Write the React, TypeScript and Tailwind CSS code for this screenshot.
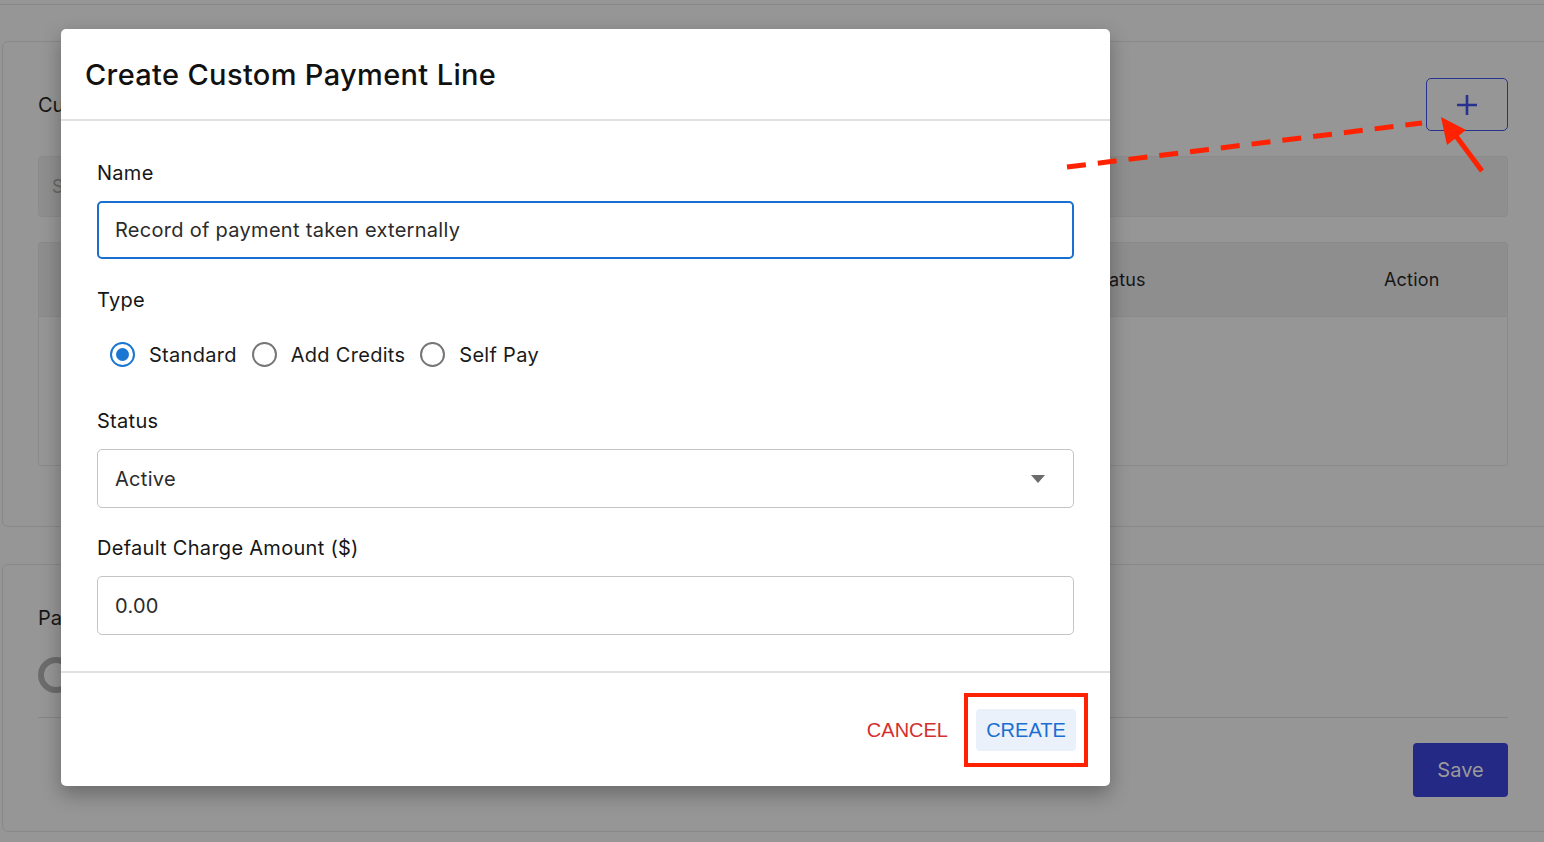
import React from 'react';

function Radio({ checked, label }: { checked?: boolean; label: string }) {
  return (
    <label className="flex items-center">
      <span
        className={`flex h-[25px] w-[25px] items-center justify-center rounded-full border-2 ${
          checked ? 'border-[#1976d2]' : 'border-[#767676]'
        }`}
      >
        {checked && <span className="h-[13px] w-[13px] rounded-full bg-[#1976d2]" />}
      </span>
      <span className="ml-[14px] text-[20px] leading-[24px] text-[#1a1a1a]">{label}</span>
    </label>
  );
}

export default function App() {
  return (
    <div className="relative h-[842px] w-[1544px] overflow-hidden bg-[#969696] font-['Inter',sans-serif] text-[#161616]">
      {/* page behind the dialog */}
      <div className="h-[5px] border-b border-[#878787]" />

      <div className="ml-[2px] mt-[36px] h-[486px] w-[1560px] rounded-[6px] border border-[#888888] pl-[35px] pt-[36px]">
        <div className="w-[1470px]">
          <div className="flex h-[53px] items-center justify-between">
            <div className="text-[20px]">Cu</div>
            <div className="flex h-[53px] w-[82px] items-center justify-center rounded-[5px] border border-[#27318f]">
              <svg width="24" height="24" viewBox="0 0 24 24" fill="none" stroke="#27318f" strokeWidth="2.6">
                <path d="M12 2v20M2 12h20" />
              </svg>
            </div>
          </div>
          <div className="mt-[25px] flex h-[61px] items-center rounded-[4px] border border-[#8b8b8b] bg-[#8f8f8f] px-[13px] text-[18px] text-[#676767]">
            S
          </div>
          <div className="mt-[25px] h-[224px] rounded-[3px] border border-[#8a8a8a]">
            <div className="flex h-[74px] items-center border-b border-[#8a8a8a] bg-[#8e8e8f] text-[18px]">
              <div className="w-[1036px]" />
              <div className="w-[293px] pl-4 tracking-[0.01em]">Status</div>
              <div className="pl-4 tracking-[0.01em]">Action</div>
            </div>
          </div>
        </div>
      </div>

      <div className="ml-[2px] mt-[37px] h-[268px] w-[1560px] rounded-[6px] border border-[#888888] pl-[35px] pt-[41px]">
        <div className="w-[1470px]">
          <div className="text-[20px] leading-[24px]">Pa</div>
          <div className="mt-[27px] h-[36px] w-[36px] rounded-full border-[6px] border-[#6c6c6c]" />
          <div className="mt-[24px] border-t border-[#858585]" />
          <div className="mt-[25px] flex justify-end">
            <div className="flex h-[54px] w-[95px] items-center justify-center rounded-[4px] bg-[#242985] text-[20px] text-[#9a9a9a]">
              Save
            </div>
          </div>
        </div>
      </div>

      {/* dialog */}
      <div className="absolute left-[61px] top-[29px] flex h-[757px] w-[1049px] flex-col rounded-[5px] bg-white shadow-[0_8px_20px_rgba(0,0,0,0.3)]">
        <div className="flex h-[92px] items-center border-b-2 border-[#e2e2e2] px-[24px]">
          <h1 className="text-[29px] font-medium leading-none tracking-[0.012em] text-[#111]">Create Custom Payment Line</h1>
        </div>

        <div className="flex-1 px-[36px] pt-[40px] tracking-[0.018em]">
          <div className="h-[24px] text-[20px] leading-[24px]">Name</div>
          <div className="mt-[16px] flex h-[58px] items-center rounded-[5px] border-2 border-[#1a6fd1] px-[16px] text-[20px] text-[#2b2b2b]">
            Record of payment taken externally
          </div>

          <div className="mt-[29px] h-[24px] text-[20px] leading-[24px]">Type</div>
          <div className="ml-[13px] mt-[30px] flex gap-[15px]">
            <Radio checked label="Standard" />
            <Radio label="Add Credits" />
            <Radio label="Self Pay" />
          </div>

          <div className="mt-[42px] h-[24px] text-[20px] leading-[24px]">Status</div>
          <div className="mt-[16px] flex h-[59px] items-center justify-between rounded-[5px] border border-[#c4c4c4] pl-[17px] pr-[28px] text-[20px] text-[#2b2b2b]">
            <span>Active</span>
            <svg width="14" height="8" viewBox="0 0 14 8">
              <path d="M0 0h14L7 8z" fill="#6b6b6b" />
            </svg>
          </div>

          <div className="mt-[28px] h-[24px] text-[20px] leading-[24px]">Default Charge Amount ($)</div>
          <div className="mt-[16px] flex h-[59px] items-center rounded-[5px] border border-[#c4c4c4] px-[17px] text-[20px] text-[#2b2b2b]">
            0.00
          </div>
        </div>

        <div className="flex h-[115px] items-center justify-end border-t-2 border-[#e2e2e2] pr-[22px] font-['Liberation_Sans',sans-serif]">
          <span className="mr-[16px] text-[20px] text-[#d32f2f]">CANCEL</span>
          <div className="flex h-[74px] w-[124px] items-center justify-center border-[4px] border-[#ff2200]">
            <div className="flex h-[42px] w-[100px] items-center justify-center rounded-[4px] bg-[#eaf1fa] text-[20px] text-[#1a6fd1]">
              CREATE
            </div>
          </div>
        </div>
      </div>

      {/* annotation arrows */}
      <svg className="pointer-events-none absolute inset-0" width="1544" height="842">
        <line x1="1067" y1="167" x2="1422" y2="123" stroke="#ff2200" strokeWidth="5" strokeDasharray="19 12" />
        <line x1="1482" y1="171" x2="1453" y2="132" stroke="#ff2200" strokeWidth="5" />
        <polygon points="1441,117 1447,145 1466,130" fill="#ff2200" />
      </svg>
    </div>
  );
}
